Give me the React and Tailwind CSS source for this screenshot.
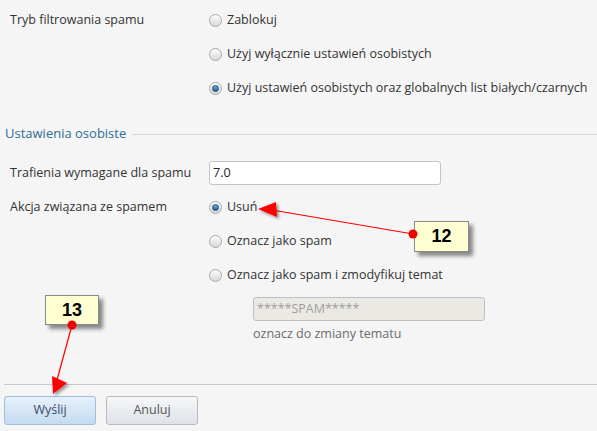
import React from "react";

const font = { fontFamily: '"Open Sans", "Noto Sans", sans-serif' };

function Radio({ checked, label }) {
  return (
    <label className="flex items-center gap-[5px] text-[12.5px] text-[#333]">
      <span className="relative flex h-[13px] w-[13px] items-center justify-center rounded-full border border-[#a8a8a8] bg-gradient-to-b from-[#fdfdfd] to-[#d9d9d9]">
        {checked && (
          <span className="h-[7px] w-[7px] rounded-full border border-[#1b4a73] bg-gradient-to-b from-[#6fb2e8] to-[#1f5f98]" />
        )}
      </span>
      <span>{label}</span>
    </label>
  );
}

function Row({ label, children }) {
  return (
    <div className="flex h-[34px] items-center">
      <div className="w-[209px] pl-[10px] text-[12.5px] text-[#333]">{label}</div>
      <div className="flex-1">{children}</div>
    </div>
  );
}

function Callout({ n, className }) {
  return (
    <div
      className={
        "absolute flex items-center justify-center border border-[#8a8a8a] bg-[#ffffd2] text-[18px] font-bold text-black shadow-[4px_4px_4px_rgba(0,0,0,0.45)] " +
        className
      }
      style={{ fontFamily: '"Liberation Sans", Arial, sans-serif' }}
    >
      {n}
    </div>
  );
}

export default function App() {
  return (
    <div className="relative h-[431px] w-[597px] overflow-hidden bg-[#f5f5f5]" style={font}>
      <div className="pt-[3px]">
        <Row label="Tryb filtrowania spamu">
          <Radio label="Zablokuj" />
        </Row>
        <Row label="">
          <Radio label="Użyj wyłącznie ustawień osobistych" />
        </Row>
        <Row label="">
          <Radio checked label="Użyj ustawień osobistych oraz globalnych list białych/czarnych" />
        </Row>

        <div className="mt-[19px] flex h-[20px] items-center pl-[5px]">
          <span className="text-[13px] text-[#2e6e96]">Ustawienia osobiste</span>
          <span className="ml-[6px] h-px flex-1 bg-[#d6d6d6]" />
        </div>

        <div className="mt-[12px]">
          <Row label="Trafienia wymagane dla spamu">
            <div className="flex h-[24px] w-[232px] items-center rounded-[3px] border border-[#c4c4c4] bg-white px-[3px] text-[12.5px] text-[#222]">
              7.0
            </div>
          </Row>
          <Row label="Akcja związana ze spamem">
            <Radio checked label="Usuń" />
          </Row>
          <Row label="">
            <Radio label="Oznacz jako spam" />
          </Row>
          <Row label="">
            <Radio label="Oznacz jako spam i zmodyfikuj temat" />
          </Row>
        </div>

        <div className="mt-[5px] pl-[253px]">
          <div className="flex h-[24px] w-[232px] items-center rounded-[3px] border border-[#c0c0c0] bg-[#ebe9e3] px-[3px] text-[12.5px] text-[#a0a0a0]">
            *****SPAM*****
          </div>
          <div className="mt-[5px] h-[16px] text-[12.5px] leading-[16px] text-[#6b6b6b]">oznacz do zmiany tematu</div>
        </div>

        <div className="ml-[4px] mt-[42px] h-px bg-[#c8c8c8]" />

        <div className="mt-[11px] flex gap-[10px] pl-[4px]">
          <button className="h-[29px] w-[92px] rounded-[3px] border border-[#9fbddd] bg-gradient-to-b from-[#e6f0fa] to-[#c4dbf1] text-[12.5px] text-[#3a4a68]">
            Wyślij
          </button>
          <button className="h-[29px] w-[92px] rounded-[3px] border border-[#b7bbc1] bg-gradient-to-b from-[#f6f7f8] to-[#dee2e7] text-[12.5px] text-[#555]">
            Anuluj
          </button>
        </div>
      </div>

      <Callout n="12" className="left-[414px] top-[221px] h-[31px] w-[55px]" />
      <Callout n="13" className="left-[45px] top-[295px] h-[30px] w-[54px]" />

      <svg className="pointer-events-none absolute left-0 top-0" width="597" height="431">
        <defs>
          <filter id="sh" x="-50%" y="-50%" width="200%" height="200%">
            <feDropShadow dx="2" dy="2" stdDeviation="1.5" floodColor="#000" floodOpacity="0.4" />
          </filter>
        </defs>
        <line x1="413" y1="234" x2="272" y2="210" stroke="#f00" strokeWidth="1.2" />
        <polygon points="258,209 276,202 277,217" fill="#f00" filter="url(#sh)" />
        <circle cx="413" cy="234" r="4.5" fill="#e00" />
        <line x1="72" y1="325" x2="57" y2="380" stroke="#f00" strokeWidth="1.2" />
        <polygon points="53,394 52,376 67,383" fill="#f00" filter="url(#sh)" />
        <circle cx="72" cy="325" r="4.5" fill="#e00" />
      </svg>
    </div>
  );
}
